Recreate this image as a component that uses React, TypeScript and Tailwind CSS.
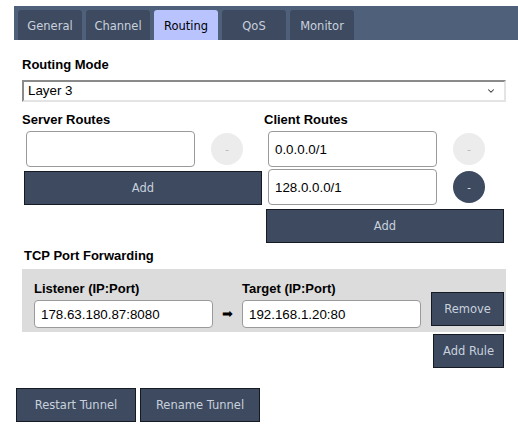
import { ChevronDown } from 'lucide-react';

const tabs = ['General', 'Channel', 'Routing', 'QoS', 'Monitor'];

const btn =
  "bg-[#3d4a60] text-[#c9d1dd] border border-[#161a22] text-[11.5px] font-['DejaVu_Sans',sans-serif] flex items-center justify-center pt-[2px]";

const RouteRow = ({ value, active }: { value: string; active?: boolean }) => (
  <div className="flex items-center pl-1">
    <input
      readOnly
      value={value}
      className="w-[169px] h-9 rounded border border-[#9a9a9a] px-[6px] text-[13.333px] text-black bg-white outline-none"
    />
    <button
      className={
        active
          ? "ml-4 w-8 h-8 rounded-full bg-[#3d4a60] text-[#dfe5ee] text-[11px] leading-none"
          : "ml-4 w-8 h-8 rounded-full bg-[#ececec] text-[#b5b5b5] text-[11px] leading-none"
      }
    >
      -
    </button>
  </div>
);

export default function App() {
  return (
    <div className="w-[518px] h-[439px] bg-white text-black font-['Liberation_Sans',Arial,sans-serif] overflow-hidden">
      <div className="ml-[14px] mt-[6px] h-[34px] bg-[#4f607a] pl-1 pt-1 flex gap-1">
        {tabs.map((t) => (
          <div
            key={t}
            className={
              t === 'Routing'
                ? "w-16 h-[30px] pt-[3px] rounded-t-[3px] bg-[#b9c4ff] text-black text-[11.5px] font-['DejaVu_Sans',sans-serif] flex items-center justify-center"
                : "w-16 h-[30px] pt-[3px] rounded-t-[3px] bg-[#3d4a60] text-[#c9d1dd] text-[11.5px] font-['DejaVu_Sans',sans-serif] flex items-center justify-center"
            }
          >
            {t}
          </div>
        ))}
      </div>

      <div className="pl-[22px] w-[506px]">
        <div className="mt-[17px] text-[13px] font-bold leading-[15px]">Routing Mode</div>
        <div className="mt-2 h-[22px] border-2 border-t-[#8a8a8a] border-l-[#8a8a8a] border-r-[#e4e4e4] border-b-[#e4e4e4] flex items-center justify-between pl-[4px] pr-[8px]">
          <span className="text-[13.333px]">Layer 3</span>
          <ChevronDown size={10} strokeWidth={2.5} className="text-[#333]" />
        </div>

        <div className="grid grid-cols-2 mt-[10px]">
          <div>
            <div className="text-[13px] font-bold leading-[15px]">Server Routes</div>
            <div className="mt-1 flex flex-col gap-[2px]">
              <RouteRow value="" />
            </div>
            <button className={`${btn} mt-1 ml-[2px] w-[238px] h-[34px]`}>Add</button>
          </div>
          <div>
            <div className="text-[13px] font-bold leading-[15px]">Client Routes</div>
            <div className="mt-1 flex flex-col gap-[2px]">
              <RouteRow value="0.0.0.0/1" />
              <RouteRow value="128.0.0.0/1" active />
            </div>
            <button className={`${btn} mt-1 ml-[2px] w-[238px] h-[34px]`}>Add</button>
          </div>
        </div>

        <div className="mt-[5px] pl-[2px] text-[13px] font-bold leading-[15px]">TCP Port Forwarding</div>
        <div className="mt-[6px] bg-[#dcdcdc] pl-3 pt-3 pb-1 flex items-end">
          <div className="flex flex-col">
            <span className="text-[13px] font-bold leading-[15px]">Listener (IP:Port)</span>
            <input
              readOnly
              value="178.63.180.87:8080"
              className="mt-1 w-[179px] h-7 rounded border border-[#9a9a9a] px-[6px] text-[13.333px] bg-white outline-none"
            />
          </div>
          <span className="w-[29px] h-7 flex items-center justify-center text-[13px]">➡</span>
          <div className="flex flex-col">
            <span className="text-[13px] font-bold leading-[15px]">Target (IP:Port)</span>
            <input
              readOnly
              value="192.168.1.20:80"
              className="mt-1 w-[179px] h-7 rounded border border-[#9a9a9a] px-[6px] text-[13.333px] bg-white outline-none"
            />
          </div>
          <button className={`${btn} ml-[10px] mb-[2px] w-[73px] h-[34px]`}>Remove</button>
        </div>
        <div className="flex justify-end pr-[2px] mt-[2px]">
          <button className={`${btn} w-[71px] h-[34px]`}>Add Rule</button>
        </div>
      </div>

      <div className="mt-5 ml-4 flex gap-1">
        <button className={`${btn} w-[120px] h-[34px]`}>Restart Tunnel</button>
        <button className={`${btn} w-[120px] h-[34px]`}>Rename Tunnel</button>
      </div>
    </div>
  );
}
